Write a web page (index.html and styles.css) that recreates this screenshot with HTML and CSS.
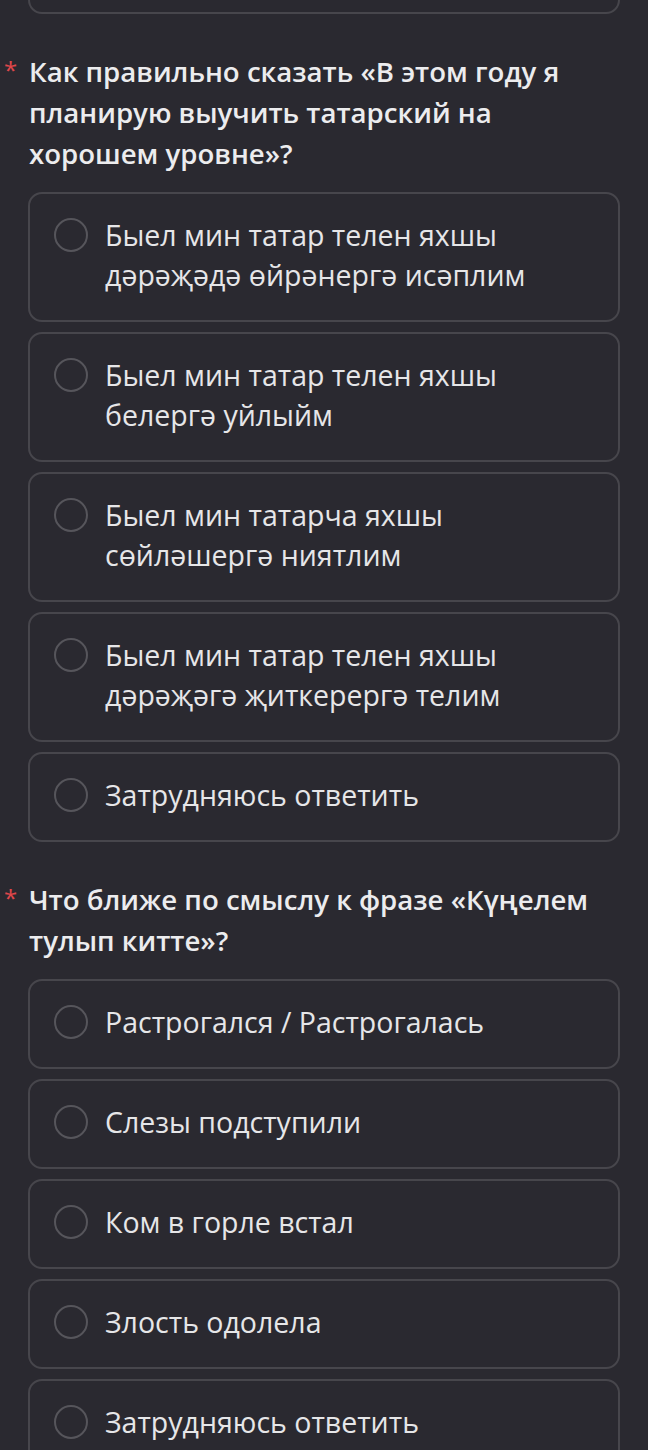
FILE: index.html
```html
<!DOCTYPE html>
<html lang="ru">
<head>
<meta charset="utf-8">
<link rel="stylesheet" href="styles.css">
</head>
<body>
<div class="page">
  <div class="option option-cut"></div>

  <div class="question">
    <div class="q-title"><span class="req">*</span>Как правильно сказать «В этом году я<br>планирую выучить татарский на<br>хорошем уровне»?</div>
    <div class="options">
      <div class="option"><span class="radio"></span><span class="label">Быел мин татар телен яхшы<br>дәрәҗәдә өйрәнергә исәплим</span></div>
      <div class="option"><span class="radio"></span><span class="label">Быел мин татар телен яхшы<br>белергә уйлыйм</span></div>
      <div class="option"><span class="radio"></span><span class="label">Быел мин татарча яхшы<br>сөйләшергә ниятлим</span></div>
      <div class="option"><span class="radio"></span><span class="label">Быел мин татар телен яхшы<br>дәрәҗәгә җиткерергә телим</span></div>
      <div class="option"><span class="radio"></span><span class="label">Затрудняюсь ответить</span></div>
    </div>
  </div>

  <div class="question">
    <div class="q-title"><span class="req">*</span>Что ближе по смыслу к фразе «Күңелем<br>тулып китте»?</div>
    <div class="options">
      <div class="option"><span class="radio"></span><span class="label">Растрогался / Растрогалась</span></div>
      <div class="option"><span class="radio"></span><span class="label">Слезы подступили</span></div>
      <div class="option"><span class="radio"></span><span class="label">Ком в горле встал</span></div>
      <div class="option"><span class="radio"></span><span class="label">Злость одолела</span></div>
      <div class="option"><span class="radio"></span><span class="label">Затрудняюсь ответить</span></div>
    </div>
  </div>
</div>
</body>
</html>
```
FILE: styles.css
```css
html, body {
  margin: 0;
  padding: 0;
  background: #2a2930;
}
body {
  font-family: "Open Sans", "Noto Sans", sans-serif;
  color: #e8e8ea;
  overflow: hidden;
}
.page {
  width: 592px;
  padding-left: 28px;
}
.option-cut {
  height: 90px;
  margin-top: -76px;
  box-sizing: border-box;
}
.question {
  margin-top: 38px;
}
.q-title {
  position: relative;
  font-size: 27.6px;
  font-weight: 600;
  line-height: 41px;
  padding-left: 1px;
  margin-top: -1px;
  color: #ececee;
}
.req {
  position: absolute;
  left: -24px;
  top: -2px;
  font-size: 24px;
  font-weight: 400;
  color: #e0474b;
}
.options {
  display: flex;
  flex-direction: column;
  gap: 10px;
  margin-top: 18px;
}
.option {
  display: flex;
  align-items: flex-start;
  gap: 17px;
  border: 2px solid #47464c;
  border-radius: 14px;
  padding: 21px 20px 25px 24px;
  font-size: 28.5px;
  line-height: 40px;
  color: #e6e6e8;
}
.radio {
  flex: none;
  width: 30px;
  height: 30px;
  margin-top: 3px;
  border: 2px solid #56555b;
  border-radius: 50%;
}
```
